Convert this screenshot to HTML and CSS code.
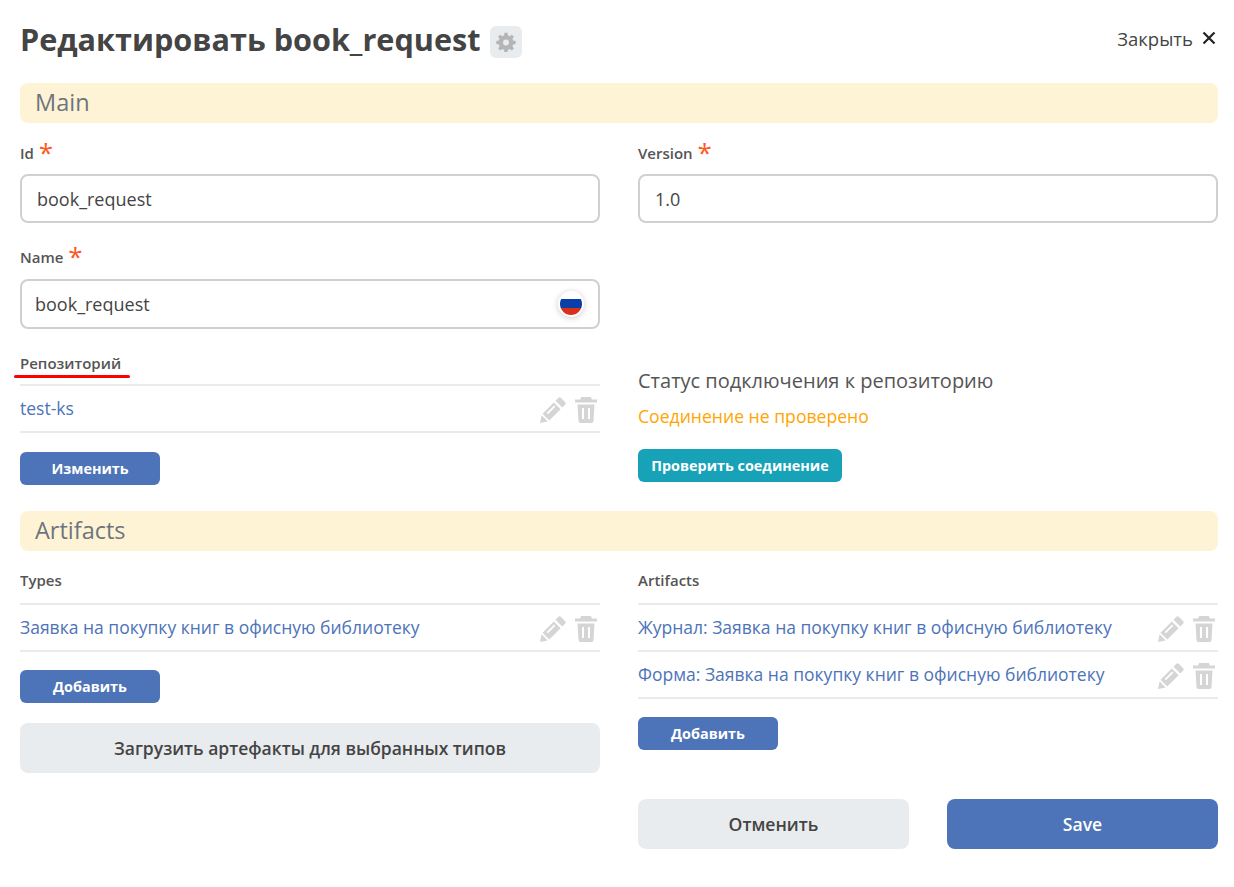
FILE: index.html
```html
<!DOCTYPE html>
<html lang="ru">
<head>
	<meta charset="UTF-8">
	<title>Редактировать book_request</title>
	<link rel="stylesheet" href="styles.css">
</head>
<body>
	<svg class="defs" width="0" height="0">
		<symbol id="pencil" viewBox="0 0 26 26">
			<path d="M18.200 1a2 2 0 0 1 2.800 0l4 4a2 2 0 0 1 0 2.800l-2.700 2.700-6.800-6.800zM13.800 5.400l6.800 6.800L9.300 23.500 2.500 16.700zM6.600 15.900l1.300 1.300 7.500-7.500-1.300-1.300zM1.600 18.300l6.100 6.100L0 26z" fill-rule="evenodd"/>
		</symbol>
		<symbol id="trash" viewBox="0 0 22 26">
			<path d="M6 0h10l.8 2.500H22v3H0v-3h5.200zM2.500 7.500h17l-1 16.700A2 2 0 0 1 16.500 26h-11a2 2 0 0 1-2-1.800zM7 11v11h2V11zM13 11v11h2V11z" fill-rule="evenodd"/>
		</symbol>
	</svg>

	<div class="page">
		<header class="top">
			<h1>Редактировать book_request</h1>
			<span class="gear">
				<svg width="20" height="20" viewBox="0 0 24 24"><path d="M13.800 1l.6 3.100c.7.2 1.400.5 2 .9l2.600-1.800 2.500 2.500L19.700 8.300c.4.600.7 1.300.9 2l3.100.6v3.600l-3.100.6c-.2.700-.5 1.400-.9 2l1.800 2.600-2.500 2.500-2.600-1.800c-.6.4-1.300.7-2 .9l-.6 3.100h-3.600l-.6-3.100c-.7-.2-1.400-.5-2-.9l-2.600 1.800-2.500-2.500 1.800-2.600c-.4-.6-.7-1.300-.9-2L.3 14.500v-3.600l3.100-.6c.2-.7.500-1.400.9-2L2.500 5.700 5 3.200 7.600 5c.6-.4 1.300-.7 2-.9L10.200 1zM12 9a3.600 3.600 0 1 0 0 7.200A3.600 3.600 0 0 0 12 9z" fill-rule="evenodd"/></svg>
			</span>
			<a class="close" href="#">Закрыть
				<svg width="14" height="14" viewBox="0 0 14 14"><path d="M1.500 1.500l11 11M12.500 1.500l-11 11"/></svg>
			</a>
		</header>

		<div class="section-title">Main</div>
		<div class="columns main-cols">
			<div class="col">
				<div class="field">
					<label class="req">Id <b>*</b></label>
					<div class="input">book_request</div>
				</div>
				<div class="field">
					<label class="req">Name <b>*</b></label>
					<div class="input input-ml">book_request
						<span class="flag"><i></i></span>
					</div>
				</div>
				<div class="list-label marked">Репозиторий</div>
				<ul class="list">
					<li><a href="#">test-ks</a>
						<span class="acts"><svg class="ic-pen"><use href="#pencil"/></svg><svg class="ic-del"><use href="#trash"/></svg></span>
					</li>
				</ul>
				<button class="btn">Изменить</button>
			</div>
			<div class="col">
				<div class="field">
					<label class="req">Version <b>*</b></label>
					<div class="input">1.0</div>
				</div>
				<div class="repo-status">
					<div class="status-title">Статус подключения к репозиторию</div>
					<div class="status-text">Соединение не проверено</div>
					<button class="btn btn-teal">Проверить соединение</button>
				</div>
			</div>
		</div>

		<div class="section-title">Artifacts</div>
		<div class="columns">
			<div class="col">
				<div class="list-label">Types</div>
				<ul class="list">
					<li><a href="#">Заявка на покупку книг в офисную библиотеку</a>
						<span class="acts"><svg class="ic-pen"><use href="#pencil"/></svg><svg class="ic-del"><use href="#trash"/></svg></span>
					</li>
				</ul>
				<button class="btn">Добавить</button>
				<button class="btn-wide">Загрузить артефакты для выбранных типов</button>
			</div>
			<div class="col">
				<div class="list-label">Artifacts</div>
				<ul class="list">
					<li><a href="#">Журнал: Заявка на покупку книг в офисную библиотеку</a>
						<span class="acts"><svg class="ic-pen"><use href="#pencil"/></svg><svg class="ic-del"><use href="#trash"/></svg></span>
					</li>
					<li><a href="#">Форма: Заявка на покупку книг в офисную библиотеку</a>
						<span class="acts"><svg class="ic-pen"><use href="#pencil"/></svg><svg class="ic-del"><use href="#trash"/></svg></span>
					</li>
				</ul>
				<button class="btn">Добавить</button>
				<div class="footer">
					<button class="btn-big btn-grey">Отменить</button>
					<button class="btn-big btn-blue">Save</button>
				</div>
			</div>
		</div>
	</div>
</body>
</html>
```

FILE: styles.css
```css
body,h1,ul,li{
	margin: 0;
	padding: 0;
}
body{
	background: #fff;
	color: #444;
	font-family: "Open Sans", "Noto Sans", sans-serif;
}
.defs{
	display: block;
	height: 0;
}
.page{
	padding: 0 16px 0 20px;
}
button{
	font-family: inherit;
	border: none;
}
.top{
	display: flex;
	align-items: center;
	height: 80px;
	margin-bottom: 3px;
}
.top h1{
	margin-bottom: 2px;
	font-size: 30.6px;
	line-height: 38px;
	font-weight: 700;
	color: #444;
}
.gear{
	display: flex;
	align-items: center;
	justify-content: center;
	width: 32px;
	height: 32px;
	margin: 4px 0 0 10px;
	border-radius: 6px;
	background: #e9ecef;
}
.gear svg{
	fill: #b5b5b5;
}
.close{
	display: flex;
	align-items: center;
	gap: 9px;
	margin: -4px 2px 0 auto;
	font-size: 18.5px;
	color: #444;
	text-decoration: none;
}
.close svg{
	fill: none;
	stroke: #222;
	stroke-width: 2.2;
}
.section-title{
	height: 40px;
	padding-left: 15px;
	border-radius: 8px;
	background: #fff3d6;
	font-size: 23.5px;
	line-height: 38px;
	color: #6c757d;
}
.columns{
	display: flex;
	gap: 38px;
}
.main-cols{
	height: 388px;
}
.col{
	width: 580px;
}
.field{
	padding-top: 16px;
	margin-bottom: 4px;
}
.req{
	display: block;
	height: 35px;
	font-size: 15px;
	font-weight: 600;
	line-height: 28px;
	color: #555;
}
.req b{
	margin-left: 1px;
	font-size: 26px;
	font-weight: 400;
	line-height: 20px;
	vertical-align: -3px;
	color: #ff5722;
}
.input{
	display: flex;
	align-items: center;
	justify-content: space-between;
	box-sizing: border-box;
	height: 49px;
	padding: 0 15px;
	border: 2px solid #d0d0d0;
	border-radius: 8px;
	font-size: 18px;
	color: #444;
}
.input-ml{
	height: 50px;
	margin-top: 1px;
	padding: 0 13px;
}
.flag{
	display: block;
	width: 26px;
	height: 26px;
	box-sizing: border-box;
	margin-right: 1px;
	padding: 2px;
	border-radius: 50%;
	background: #fff;
	box-shadow: 0 1px 6px rgba(0,0,0,.2);
}
.flag i{
	display: block;
	width: 100%;
	height: 100%;
	border-radius: 50%;
	background: linear-gradient(#fff 27%, #0b3fa8 27%, #0b3fa8 68%, #d8301a 68%);
}
.list-label{
	position: relative;
	height: 49px;
	padding-top: 19px;
	box-sizing: border-box;
	font-size: 15px;
	font-weight: 600;
	line-height: 20px;
	color: #555;
}
.marked{
	height: 51px;
	padding-top: 20px;
}
.marked:after{
	position: absolute;
	left: -6px;
	top: 42px;
	width: 116px;
	height: 3px;
	border-radius: 2px;
	background: #f00;
	content: "";
}
.list{
	list-style: none;
	border-top: 2px solid #e9ecef;
	margin-top: 3px;
}
.marked + .list{
	margin-top: 0;
}
.list li{
	display: flex;
	align-items: center;
	justify-content: space-between;
	height: 45px;
	border-bottom: 2px solid #e9ecef;
}
.list a{
	margin-bottom: 2px;
	font-size: 17.5px;
	color: #4d73b8;
	text-decoration: none;
}
.acts{
	display: flex;
	align-items: center;
	gap: 9px;
	margin: 2px 3px 0 0;
	fill: #d5d5d5;
}
.ic-pen{
	width: 26px;
	height: 26px;
}
.ic-del{
	width: 22px;
	height: 26px;
}
.btn{
	display: block;
	width: 140px;
	height: 33px;
	margin-top: 18px;
	border-radius: 6px;
	background: #4d73b8;
	font-size: 14.4px;
	font-weight: 700;
	color: #fff;
}
.marked ~ .btn{
	margin-top: 19px;
}
.repo-status{
	padding-top: 141px;
}
.status-title{
	font-size: 20px;
	line-height: 26px;
	color: #555;
}
.status-text{
	margin-top: 9px;
	font-size: 17.6px;
	line-height: 26px;
	color: #ffa500;
}
.btn-teal{
	width: 204px;
	margin-top: 20px;
	background: #17a2b8;
}
.btn-wide{
	display: block;
	width: 100%;
	height: 50px;
	margin-top: 20px;
	border-radius: 8px;
	background: #e9ecef;
	font-size: 17.5px;
	font-weight: 600;
	color: #444;
}
.footer{
	display: flex;
	justify-content: space-between;
	margin-top: 49px;
}
.btn-big{
	width: 271px;
	height: 50px;
	border-radius: 8px;
	font-size: 17.6px;
	font-weight: 600;
}
.btn-grey{
	background: #e9ecef;
	color: #444;
}
.btn-blue{
	background: #4d73b8;
	color: #fff;
}
```
